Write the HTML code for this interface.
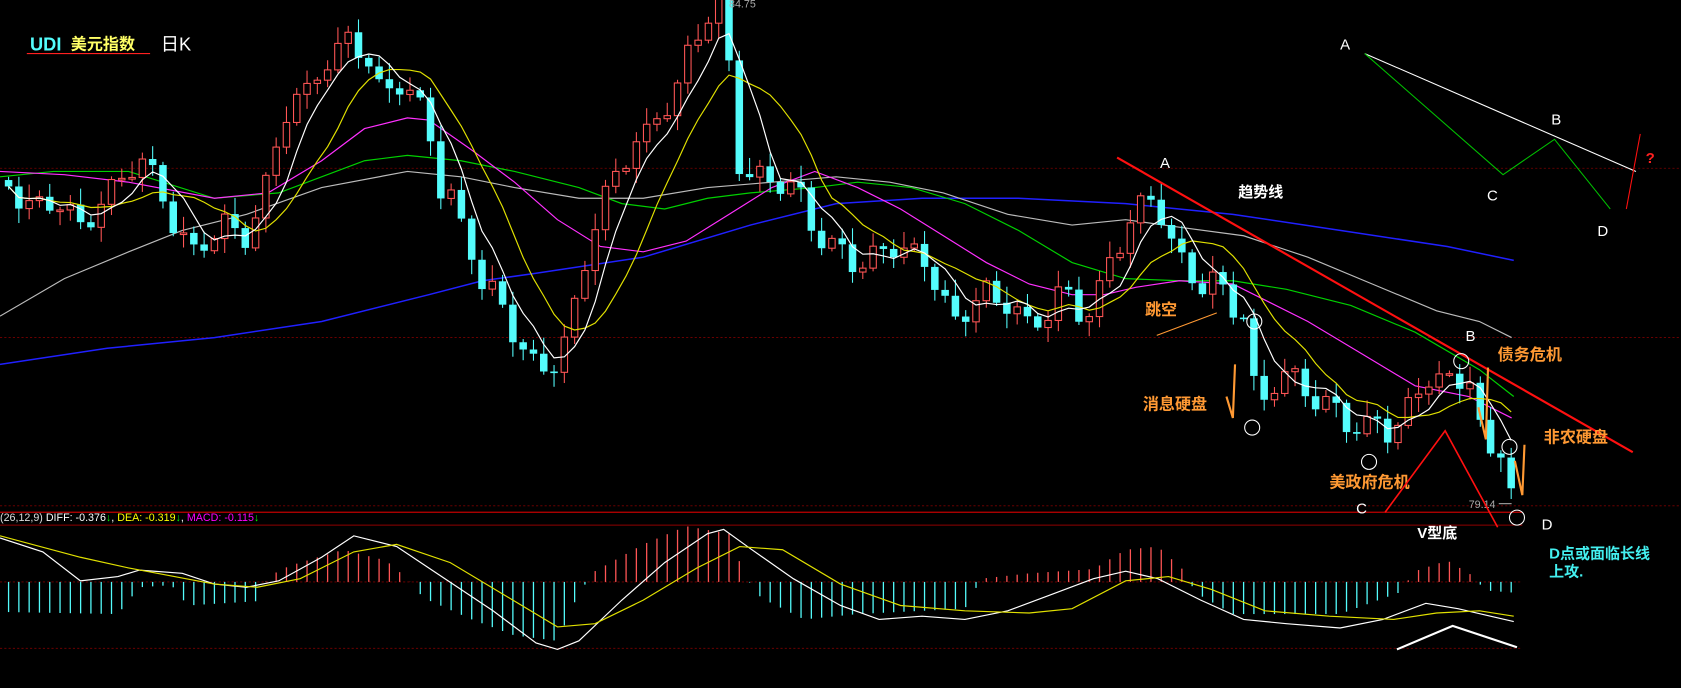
<!DOCTYPE html>
<html><head><meta charset="utf-8"><style>
html,body{margin:0;padding:0;background:#000;overflow:hidden}
svg{display:block}
text{font-family:"Liberation Sans","Noto Sans CJK SC",sans-serif}
polyline{fill:none}
</style></head><body>
<svg id="s" width="1681" height="688" viewBox="0 0 1568 642" preserveAspectRatio="none" xmlns="http://www.w3.org/2000/svg">
<rect width="1568" height="642" fill="#000"/>
<g stroke="#7a0000" stroke-width="0.8" stroke-dasharray="2,2">
<line x1="0" y1="157" x2="1568" y2="157"/>
<line x1="0" y1="315" x2="1568" y2="315"/>
<line x1="0" y1="472" x2="1568" y2="472"/>
<line x1="0" y1="543" x2="1420" y2="543"/>
<line x1="0" y1="605" x2="1420" y2="605"/>
</g>
<line x1="0" y1="478" x2="1420" y2="478" stroke="#c00000" stroke-width="1.2"/>
<line x1="0" y1="490" x2="1420" y2="490" stroke="#900000" stroke-width="1"/>
<g id="hist" fill="none"></g>
<g id="mas" fill="none" stroke-width="1.1"></g>
<g id="candles"></g>
<g id="mas2" fill="none" stroke-width="1.1"></g>
<text x="28" y="47" font-size="17" font-weight="bold" fill="#54fcfc" font-family="Liberation Serif">UDI</text>
<text x="66" y="46" font-size="15" font-weight="bold" fill="#ffff66">美元指数</text>
<line x1="25" y1="50" x2="140" y2="50" stroke="#ff2020" stroke-width="1"/>
<text x="150" y="47" font-size="17" fill="#fff">日K</text>
<text x="680" y="7" font-size="10" fill="#aaa">84.75</text>
<text x="1370" y="474" font-size="10" fill="#aaa">79.14</text>
<line x1="1398" y1="470" x2="1410" y2="470" stroke="#aaa"/>
<text x="0" y="486" font-size="10" fill="#ddd" font-family="Liberation Mono">(26,12,9) <tspan fill="#fff">DIFF: -0.376</tspan><tspan fill="#0f0">↓</tspan><tspan fill="#fff">, </tspan><tspan fill="#ff0">DEA: -0.319</tspan><tspan fill="#0f0">↓</tspan><tspan fill="#fff">, </tspan><tspan fill="#f0f">MACD: -0.115</tspan><tspan fill="#0f0">↓</tspan></text>
<line x1="1042" y1="147" x2="1523" y2="422" stroke="#ff1010" stroke-width="2"/>
<text x="1082" y="157" font-size="14" fill="#fff" font-family="Liberation Serif">A</text>
<text x="1155" y="184" font-size="14" font-weight="bold" fill="#fff">趋势线</text>
<text x="1367" y="318" font-size="14" fill="#fff" font-family="Liberation Serif">B</text>
<text x="1397" y="336" font-size="15" font-weight="bold" fill="#ff9933">债务危机</text>
<text x="1440" y="413" font-size="15" font-weight="bold" fill="#ff9933">非农硬盘</text>
<text x="1068" y="294" font-size="15" font-weight="bold" fill="#ff9933">跳空</text>
<line x1="1079" y1="313" x2="1135" y2="292" stroke="#ff9933" stroke-width="1"/>
<text x="1066" y="382" font-size="15" font-weight="bold" fill="#ff9933">消息硬盘</text>
<text x="1240" y="455" font-size="15" font-weight="bold" fill="#ff9933">美政府危机</text>
<text x="1265" y="479" font-size="14" fill="#fff" font-family="Liberation Serif">C</text>
<text x="1322" y="502" font-size="14" font-weight="bold" fill="#fff">V型底</text>
<text x="1438" y="494" font-size="14" fill="#fff" font-family="Liberation Serif">D</text>
<text x="1445" y="521" font-size="14" font-weight="bold" fill="#44f0f0">D点或面临长线</text>
<text x="1445" y="538" font-size="14" font-weight="bold" fill="#44f0f0">上攻.</text>
<g stroke="#ff9933" stroke-width="2" fill="none">
<polyline points="1144,370 1150,390 1152,340"/>
<polyline points="1379,380 1386,410 1388,343"/>
<polyline points="1413,430 1420,462 1422,415"/>
</g>
<g stroke="#fff" stroke-width="1" fill="none">
<circle cx="1170" cy="300" r="7"/><circle cx="1168" cy="399" r="7"/>
<circle cx="1277" cy="431" r="7"/><circle cx="1363" cy="337" r="7"/>
<circle cx="1408" cy="417" r="7"/><circle cx="1415" cy="483" r="7"/>
</g>
<polyline points="1292,478 1348,402 1397,492" stroke="#ff1010" stroke-width="1.5" fill="none"/>
<polyline points="1303,606 1355,584 1415,604" stroke="#fff" stroke-width="2" fill="none"/>
<text x="1250" y="46" font-size="14" fill="#fff" font-family="Liberation Serif">A</text>
<line x1="1273" y1="50" x2="1526" y2="160" stroke="#fff" stroke-width="1"/>
<polyline points="1273,50 1402,163 1450,130 1502,195" stroke="#00c000" fill="none" stroke-width="1"/>
<text x="1447" y="116" font-size="14" fill="#fff" font-family="Liberation Serif">B</text>
<text x="1387" y="187" font-size="14" fill="#fff" font-family="Liberation Serif">C</text>
<text x="1490" y="220" font-size="14" fill="#fff" font-family="Liberation Serif">D</text>
<line x1="1530" y1="125" x2="1517" y2="195" stroke="#ff1010" stroke-width="1"/>
<text x="1535" y="152" font-size="14" fill="#ff2020" font-weight="bold">?</text>
</svg>
<script>
(function(){
var NS="http://www.w3.org/2000/svg";
function el(p,t,a){var e=document.createElementNS(NS,t);for(var k in a)e.setAttribute(k,a[k]);p.appendChild(e);return e;}
function interp(pts,x){for(var i=0;i<pts.length-1;i++){if(x<=pts[i+1][0]){var a=pts[i],b=pts[i+1];return a[1]+(b[1]-a[1])*(x-a[0])/(b[0]-a[0]);}}return pts[pts.length-1][1];}
var path=[[0,170],[20,180],[40,195],[55,190],[75,215],[95,180],[110,175],[130,150],[150,175],[165,210],[180,240],[195,225],[210,210],[230,215],[245,190],[255,150],[265,110],[275,95],[290,80],[300,50],[310,60],[325,40],[340,50],[355,85],[370,70],[385,95],[400,120],[410,175],[420,180],[440,230],[450,270],[470,290],[485,320],[500,340],[520,340],[530,320],[540,270],[550,220],[560,190],[575,160],[590,140],[605,130],[615,100],[630,85],[645,40],[660,20],[675,10],[680,60],[690,150],[700,160],[715,170],[730,175],[745,180],[760,210],[775,230],[790,240],[800,255],[815,240],[830,220],[850,240],[865,250],[880,280],[890,300],[905,280],[915,270],[930,290],[945,280],[960,305],[975,290],[990,275],[1005,295],[1020,285],[1035,240],[1050,215],[1060,205],[1075,185],[1085,200],[1095,230],[1105,245],[1115,260],[1125,275],[1135,265],[1145,280],[1160,290],[1165,340],[1175,380],[1185,360],[1200,355],[1215,360],[1230,370],[1245,380],[1255,395],[1270,410],[1285,390],[1300,400],[1315,380],[1330,355],[1345,360],[1360,350],[1370,340],[1380,400],[1390,430],[1400,420],[1410,460],[1415,465]];
var cg=document.getElementById('candles'),closes=[],xs=[];
var prev=168;
for(var i=0;i<148;i++){var x=8+i*9.6;if(x>1415)break;
 var c=interp(path,x)+12*Math.sin(i*1.7)+5*Math.sin(i*0.9);
 var o=prev;prev=c;closes.push(c);xs.push(x);
 var tp=Math.min(o,c),bt=Math.max(o,c);
 var hi=tp-(3+(i*7%5)*3),lo=bt+(3+(i*3%4)*3.5);
 if(bt-tp<1.5){bt=tp+1.5;}
 if(c<o){el(cg,'line',{x1:x,y1:hi,x2:x,y2:tp,stroke:'#ff5555','stroke-width':1});
  el(cg,'line',{x1:x,y1:bt,x2:x,y2:lo,stroke:'#ff5555','stroke-width':1});
  el(cg,'rect',{x:x-3,y:tp,width:6,height:bt-tp,fill:'#000',stroke:'#ff5555','stroke-width':1});}
 else{el(cg,'line',{x1:x,y1:hi,x2:x,y2:lo,stroke:'#54fcfc','stroke-width':1});
  el(cg,'rect',{x:x-3.5,y:tp,width:7,height:bt-tp,fill:'#54fcfc'});}
}
var mg=document.getElementById('mas'),mg2=document.getElementById('mas2');
function ma(n,col){var pts=[];for(var i=0;i<closes.length;i++){var s=0,k=0;for(var j=Math.max(0,i-n+1);j<=i;j++){s+=closes[j];k++;}pts.push(xs[i].toFixed(1)+','+(s/k).toFixed(1));}el(mg2,'polyline',{points:pts.join(' '),stroke:col,fill:'none'});}
function pl(p,col,w,g){el(g||mg,'polyline',{points:p.map(function(a){return a.join(',')}).join(' '),stroke:col,'stroke-width':w||1.1,fill:'none'});}
pl([[0,340],[100,325],[200,315],[300,300],[400,275],[450,262],[500,255],[600,240],[700,210],[780,190],[860,185],[950,185],[1050,190],[1150,200],[1250,215],[1350,230],[1412,243]],'#2020ff',1.4);
pl([[0,295],[60,260],[120,235],[170,215],[230,200],[300,175],[380,160],[430,165],[480,175],[540,185],[600,185],[660,175],[720,170],[780,165],[830,170],[880,180],[940,200],[1000,210],[1050,205],[1100,212],[1160,220],[1220,240],[1280,265],[1340,290],[1380,300],[1410,315]],'#bbbbbb');
pl([[0,165],[50,160],[120,160],[200,185],[260,180],[300,165],[340,150],[380,145],[430,150],[480,160],[540,175],[580,190],[620,195],[660,185],[700,180],[760,175],[800,170],[850,175],[900,190],[950,215],[1000,245],[1050,260],[1100,262],[1150,262],[1200,270],[1260,285],[1320,310],[1380,345],[1412,370]],'#00d000');
pl([[0,160],[60,163],[120,170],[200,185],[250,180],[300,150],[340,120],[380,110],[400,112],[440,140],[480,170],[520,205],[560,230],[600,235],[640,225],[680,200],[720,175],[760,160],[800,175],[840,195],[880,220],[920,245],[960,265],[1000,275],[1030,275],[1060,268],[1100,262],[1150,265],[1180,280],[1220,300],[1270,330],[1320,360],[1370,370],[1410,390]],'#ff30ff');
ma(10,'#e0e000');ma(5,'#ffffff');
var hk=[[0,-28],[110,-30],[130,-5],[160,-3],[175,-22],[240,-18],[250,5],[270,15],[320,30],[360,20],[380,3],[395,-15],[440,-35],[480,-50],[520,-55],[540,-10],[555,10],[600,35],[640,52],[680,45],[695,5],[710,-15],[750,-35],[800,-30],[900,-25],[915,3],[960,8],[1020,12],[1050,30],[1080,33],[1105,10],[1115,-10],[1150,-30],[1250,-30],[1305,-10],[1320,10],[1350,20],[1375,5],[1385,-8],[1412,-10]];
var hg=document.getElementById('hist');
for(var i=0;i<xs.length;i++){var v=interp(hk,xs[i]);el(hg,'line',{x1:xs[i],y1:543,x2:xs[i],y2:543-v,stroke:v>=0?'#ff5555':'#54fcfc','stroke-width':1.2});}
pl([[0,502],[40,515],[75,542],[110,538],[130,532],[170,535],[200,545],[230,548],[260,542],[300,520],[330,500],[370,510],[400,530],[460,570],[500,600],[520,606],[540,598],[580,560],[620,525],[660,498],[675,494],[700,512],[740,540],[784,565],[820,578],[860,575],[900,578],[940,570],[980,555],[1020,540],[1050,533],[1080,540],[1120,560],[1160,578],[1200,582],[1250,586],[1290,578],[1330,563],[1360,568],[1412,580]],'#ffffff',1.1,hg);
pl([[0,500],[75,520],[120,530],[200,545],[240,548],[280,540],[330,515],[370,508],[420,525],[470,555],[520,585],[555,582],[600,560],[650,530],[690,510],[730,513],[784,545],[840,565],[900,570],[960,572],[1000,568],[1050,542],[1090,538],[1130,550],[1180,570],[1240,575],[1300,578],[1340,572],[1380,570],[1412,575]],'#e0e000',1.1,hg);
})();
</script>
</body></html>
